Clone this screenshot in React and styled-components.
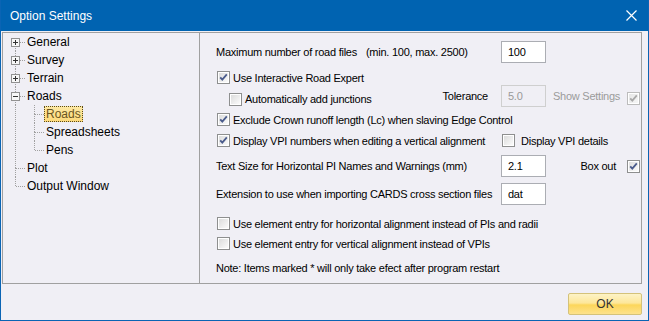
import React from "react";
import styled, { createGlobalStyle } from "styled-components";

const GlobalStyle = createGlobalStyle`
  body {
    margin: 0;
    background: #f0eff5;
    font-family: "Liberation Sans", Arial, sans-serif;
  }
`;

const treeItems = [
  { label: "General", level: 0, expander: "plus", first: true },
  { label: "Survey", level: 0, expander: "plus" },
  { label: "Terrain", level: 0, expander: "plus" },
  { label: "Roads", level: 0, expander: "minus" },
  { label: "Roads", level: 1, guides: [true], first: true, selected: true },
  { label: "Spreadsheets", level: 1, guides: [true] },
  { label: "Pens", level: 1, guides: [true], last: true },
  { label: "Plot", level: 0 },
  { label: "Output Window", level: 0, last: true },
];

const Check = ({ checked, disabled }) => (
  <CheckBox width="13" height="13" viewBox="0 0 13 13">
    <defs>
      <linearGradient id={disabled ? "cbd" : "cb"} x1="0" y1="0" x2="1" y2="1">
        <stop offset="0" stopColor={disabled ? "#e6e6e6" : "#dcdcdc"} />
        <stop offset="1" stopColor={disabled ? "#f6f6f6" : "#fbfbfb"} />
      </linearGradient>
    </defs>
    <rect x="0.5" y="0.5" width="12" height="12" fill="#fff" stroke={disabled ? "#bcbcbc" : "#8e8f8f"} />
    <rect x="2" y="2" width="9" height="9" fill={`url(#${disabled ? "cbd" : "cb"})`} />
    {checked && (
      <path
        d="M3.2 6.3 L5.3 8.6 L9.8 3.4"
        fill="none"
        stroke={disabled ? "#a9a9a9" : "#4b5c8c"}
        strokeWidth="1.8"
      />
    )}
  </CheckBox>
);

const Expander = ({ type }) => (
  <svg width="9" height="9" viewBox="0 0 9 9" style={{ display: "block" }}>
    <rect x="0.5" y="0.5" width="8" height="8" fill="#f7f7f7" stroke="#919191" />
    <line x1="2" y1="4.5" x2="7" y2="4.5" stroke="#333" />
    {type === "plus" && <line x1="4.5" y1="2" x2="4.5" y2="7" stroke="#333" />}
  </svg>
);

const Connector = ({ item }) => (
  <ConnectorCell>
    <svg width="22" height="18" viewBox="0 0 22 18">
      <g stroke="#a0a0a0" strokeDasharray="1 1">
        {!item.first || item.level > 0 ? <line x1="12.5" y1="0" x2="12.5" y2="9" /> : null}
        {!item.last && <line x1="12.5" y1="9" x2="12.5" y2="18" />}
        <line x1="13" y1="9.5" x2="22" y2="9.5" />
      </g>
    </svg>
    {item.expander && (
      <ExpanderSlot>
        <Expander type={item.expander} />
      </ExpanderSlot>
    )}
  </ConnectorCell>
);

const Guide = ({ on }) => (
  <GuideCell>
    {on && (
      <svg width="19" height="18" viewBox="0 0 19 18">
        <line x1="12.5" y1="0" x2="12.5" y2="18" stroke="#a0a0a0" strokeDasharray="1 1" />
      </svg>
    )}
  </GuideCell>
);

const App = () => {
  return (
    <>
      <GlobalStyle />
      <Window>
        <TitleBar>
          <Title>Option Settings</Title>
          <CloseButton>
            <svg width="11" height="11" viewBox="0 0 11 11">
              <path d="M0.5 0.5 L10.5 10.5 M10.5 0.5 L0.5 10.5" stroke="#fff" strokeWidth="1.2" />
            </svg>
          </CloseButton>
        </TitleBar>
        <MainBox>
          <Tree>
            {treeItems.map((item, i) => (
              <TreeRow key={i}>
                {(item.guides || []).map((g, j) => (
                  <Guide key={j} on={g} />
                ))}
                <Connector item={item} />
                <TreeLabel $selected={item.selected}>{item.label}</TreeLabel>
              </TreeRow>
            ))}
          </Tree>
          <Panel>
            <Row $mt={8} $h={22}>
              <LabelCell>
                Maximum number of road files<Hint>(min. 100, max. 2500)</Hint>
              </LabelCell>
              <Input>100</Input>
            </Row>
            <Row $mt={8} $h={13}>
              <CheckLabel>
                <Check checked />
                Use Interactive Road Expert
              </CheckLabel>
            </Row>
            <Row $mt={1} $h={22}>
              <LabelCell>
                <CheckLabel $indent={12} $drop>
                  <Check />
                  Automatically add junctions
                </CheckLabel>
                <Tolerance>Tolerance</Tolerance>
              </LabelCell>
              <Input $disabled>5.0</Input>
              <Extra $disabled>Show Settings</Extra>
              <CheckSlot $drop>
                <Check checked disabled />
              </CheckSlot>
            </Row>
            <Row $mt={6} $h={13}>
              <CheckLabel>
                <Check checked />
                Exclude Crown runoff length (Lc) when slaving Edge Control
              </CheckLabel>
            </Row>
            <Row $mt={8} $h={13}>
              <LabelCell>
                <CheckLabel>
                  <Check checked />
                  Display VPI numbers when editing a vertical alignment
                </CheckLabel>
              </LabelCell>
              <CheckLabel $indent={0}>
                <Check />
                <Gap>Display VPI details</Gap>
              </CheckLabel>
            </Row>
            <Row $mt={8} $h={22}>
              <LabelCell>Text Size for Horizontal PI Names and Warnings (mm)</LabelCell>
              <Input>2.1</Input>
              <Extra>Box out</Extra>
              <CheckSlot>
                <Check checked />
              </CheckSlot>
            </Row>
            <Row $mt={6} $h={22}>
              <LabelCell>Extension to use when importing CARDS cross section files</LabelCell>
              <Input>dat</Input>
            </Row>
            <Row $mt={12} $h={13}>
              <CheckLabel>
                <Check />
                Use element entry for horizontal alignment instead of PIs and radii
              </CheckLabel>
            </Row>
            <Row $mt={7} $h={13}>
              <CheckLabel>
                <Check />
                Use element entry for vertical alignment instead of VPIs
              </CheckLabel>
            </Row>
            <Row $mt={11} $h={14}>
              <LabelCell>Note: Items marked * will only take efect after program restart</LabelCell>
            </Row>
          </Panel>
        </MainBox>
        <Footer>
          <OkButton>OK</OkButton>
        </Footer>
      </Window>
    </>
  );
};

export default App;

const Window = styled.div`
  width: 649px;
  height: 321px;
  box-sizing: border-box;
  border: 1px solid #0a64b4;
  border-top: none;
  background: #f0eff5;
  display: flex;
  flex-direction: column;
  overflow: hidden;
`;

const TitleBar = styled.div`
  height: 31px;
  flex-shrink: 0;
  margin: 0 -1px;
  background: #0063b1;
  display: flex;
  align-items: center;
  padding: 0 0 0 10px;
`;

const Title = styled.div`
  color: #fff;
  font-size: 12px;
  flex-grow: 1;
  padding-top: 1px;
`;

const CloseButton = styled.div`
  width: 46px;
  height: 31px;
  display: flex;
  align-items: center;
  justify-content: center;
  margin-right: -5px;
  svg {
    display: block;
  }
`;

const MainBox = styled.div`
  margin: 1px 0 0 1px;
  width: 640px;
  height: 252px;
  box-sizing: border-box;
  border: 1px solid #a0a0a0;
  display: flex;
  flex-shrink: 0;
`;

const Tree = styled.div`
  width: 196px;
  flex-shrink: 0;
  border-right: 1px solid #a0a0a0;
  font-size: 12px;
  color: #000;
`;

const TreeRow = styled.div`
  height: 18px;
  display: flex;
  align-items: center;
`;

const ConnectorCell = styled.div`
  position: relative;
  width: 22px;
  height: 18px;
  flex-shrink: 0;
  svg {
    display: block;
  }
`;

const ExpanderSlot = styled.div`
  position: absolute;
  left: 8px;
  top: 5px;
`;

const GuideCell = styled.div`
  width: 19px;
  height: 18px;
  flex-shrink: 0;
  svg {
    display: block;
  }
`;

const TreeLabel = styled.div`
  padding: 1px 2px;
  line-height: 14px;
  white-space: nowrap;
  background: ${(p) => (p.$selected ? "linear-gradient(#fde9a4, #fcd97a)" : "transparent")};
  outline: ${(p) => (p.$selected ? "1px dotted #5a4a1a" : "none")};
  outline-offset: -1px;
  color: ${(p) => (p.$selected ? "#6a5520" : "#000")};
`;

const Panel = styled.div`
  flex-grow: 1;
  padding-left: 16px;
  font-size: 11px;
  letter-spacing: -0.25px;
  color: #000;
  display: flex;
  flex-direction: column;
`;

const Row = styled.div`
  display: flex;
  align-items: center;
  margin-top: ${(p) => p.$mt}px;
  height: ${(p) => p.$h}px;
  white-space: nowrap;
`;

const LabelCell = styled.div`
  width: 285px;
  flex-shrink: 0;
  display: flex;
  align-items: center;
`;

const Hint = styled.span`
  margin-left: 9px;
`;

const CheckLabel = styled.div`
  display: flex;
  align-items: center;
  gap: 3px;
  margin-left: ${(p) => (p.$indent ?? 0) + 1}px;
  margin-top: ${(p) => (p.$drop ? "6px" : "0")};
`;

const Gap = styled.span`
  margin-left: 3px;
`;

const CheckBox = styled.svg`
  display: block;
  flex-shrink: 0;
`;

const Tolerance = styled.span`
  margin-left: auto;
  margin-right: 13px;
`;

const Input = styled.div`
  width: 45px;
  height: 22px;
  box-sizing: border-box;
  flex-shrink: 0;
  border: 1px solid ${(p) => (p.$disabled ? "#cfcfcf" : "#abadb3")};
  background: ${(p) => (p.$disabled ? "#f0eff5" : "#fff")};
  color: ${(p) => (p.$disabled ? "#9a9a9a" : "#000")};
  padding: 3px 0 0 6px;
  line-height: 14px;
`;

const Extra = styled.span`
  margin-left: ${(p) => (p.$disabled ? "7px" : "auto")};
  color: ${(p) => (p.$disabled ? "#9b9b9b" : "#000")};
`;

const CheckSlot = styled.div`
  margin-left: ${(p) => (p.$drop ? "auto" : "11px")};
  margin-right: 1px;
  margin-top: ${(p) => (p.$drop ? "4px" : "0")};
`;

const Footer = styled.div`
  flex-grow: 1;
  display: flex;
  justify-content: flex-end;
  align-items: flex-start;
  padding: 9px 6px 0 0;
`;

const OkButton = styled.div`
  width: 74px;
  height: 22px;
  box-sizing: border-box;
  border: 1px solid #d4c27a;
  border-radius: 2px;
  background: linear-gradient(#fdf3c6 0%, #fde79a 45%, #fcd65a 55%, #fde28c 100%);
  display: flex;
  align-items: center;
  justify-content: center;
  font-size: 12px;
  color: #333;
`;
